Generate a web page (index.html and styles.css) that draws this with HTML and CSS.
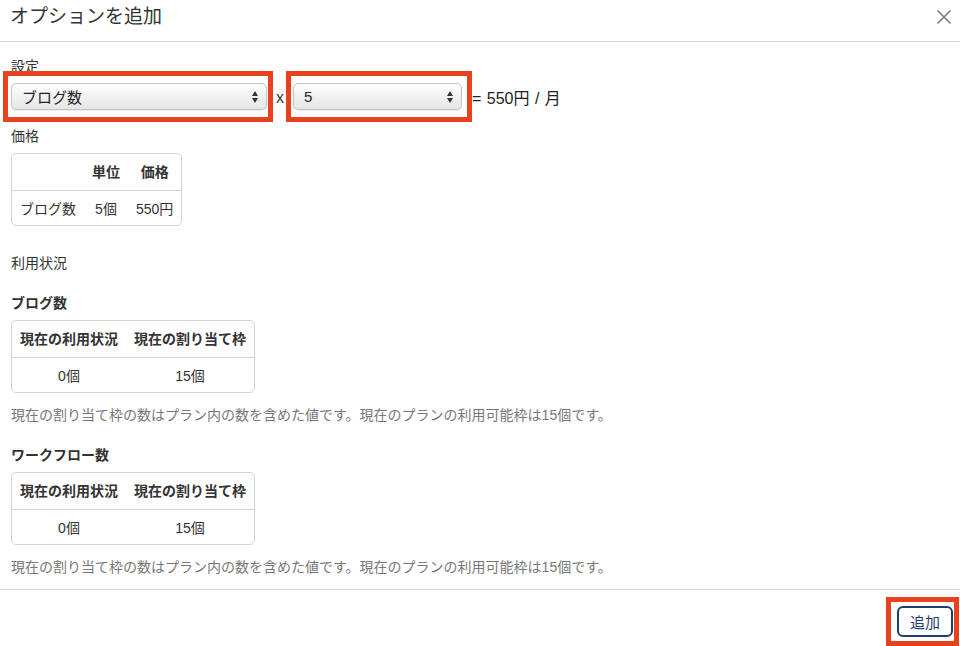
FILE: index.html
```html
<!DOCTYPE html>
<html lang="ja">
<head>
    <meta charset="UTF-8">
    <meta name="viewport" content="width=device-width, initial-scale=1.0">
    <title>オプションを追加</title>
    <link rel="stylesheet" href="styles.css">
</head>
<body>

<div class="modal">
    <div class="modal-header">
        <h4 class="modal-title">オプションを追加</h4>
        <button class="close" aria-label="閉じる">
            <svg width="16" height="16" viewBox="0 0 16 16">
                <path d="M1.5 1.5 L14.5 14.5 M14.5 1.5 L1.5 14.5" stroke="#6f6f6f" stroke-width="1.4" fill="none"/>
            </svg>
        </button>
    </div>

    <div class="modal-body">
        <div class="label">設定</div>
        <div class="setting-row">
            <span class="mark mark-first">
                <span class="select-box select-type">
                    ブログ数
                    <svg class="arrows" width="6" height="12" viewBox="0 0 6 12"><path d="M0 5 L3 0 L6 5 Z M0 7 L3 12 L6 7 Z" fill="#333"/></svg>
                </span>
            </span>
            <span class="times">x</span>
            <span class="mark mark-second">
                <span class="select-box select-count">
                    5
                    <svg class="arrows" width="6" height="12" viewBox="0 0 6 12"><path d="M0 5 L3 0 L6 5 Z M0 7 L3 12 L6 7 Z" fill="#333"/></svg>
                </span>
            </span>
            <span class="total">= 550円 / 月</span>
        </div>

        <div class="label label-price">価格</div>
        <div class="table-wrap">
            <table>
                <tr><th></th><th>単位</th><th>価格</th></tr>
                <tr><td>ブログ数</td><td>5個</td><td>550円</td></tr>
            </table>
        </div>

        <div class="label label-usage">利用状況</div>

        <div class="usage">
            <h5>ブログ数</h5>
            <div class="table-wrap">
                <table>
                    <tr><th>現在の利用状況</th><th>現在の割り当て枠</th></tr>
                    <tr><td>0個</td><td>15個</td></tr>
                </table>
            </div>
            <p class="note">現在の割り当て枠の数はプラン内の数を含めた値です。現在のプランの利用可能枠は15個です。</p>
        </div>

        <div class="usage">
            <h5>ワークフロー数</h5>
            <div class="table-wrap">
                <table>
                    <tr><th>現在の利用状況</th><th>現在の割り当て枠</th></tr>
                    <tr><td>0個</td><td>15個</td></tr>
                </table>
            </div>
            <p class="note">現在の割り当て枠の数はプラン内の数を含めた値です。現在のプランの利用可能枠は15個です。</p>
        </div>
    </div>

    <div class="modal-footer">
        <span class="mark mark-button">
            <button class="btn-add">追加</button>
        </span>
    </div>
</div>

</body>
</html>
```

FILE: styles.css
```css
body {
    margin: 0;
    padding: 0;
    background-color: #fff;
    color: #333;
    font-family: "Liberation Sans", "Noto Sans CJK JP", sans-serif;
    font-size: 14px;
}
.modal {
    width: 960px;
    height: 646px;
    overflow: hidden;
}
.modal-header {
    height: 41px;
    box-sizing: content-box;
    border-bottom: 1px solid #d3d3d3;
    display: flex;
    justify-content: space-between;
    align-items: flex-start;
    padding: 0 8px 0 10px;
}
.modal-title {
    margin: 0;
    padding-top: 4px;
    font-size: 19px;
    font-weight: normal;
    line-height: 25px;
    color: #333;
}
.close {
    margin-top: 9px;
    padding: 0;
    border: none;
    background: none;
    width: 16px;
    height: 16px;
    cursor: pointer;
}
.modal-body {
    padding: 14px 11px 12px;
}
.label {
    font-size: 14px;
    line-height: 20px;
}
.setting-row {
    display: flex;
    align-items: center;
    margin-top: 7px;
    height: 27px;
}
.mark {
    position: relative;
    display: inline-flex;
}
.mark::after {
    content: "";
    position: absolute;
    border: 5px solid #e8411e;
    pointer-events: none;
}
.mark-first::after {
    left: -8px;
    right: -6px;
    top: -12px;
    bottom: -12px;
}
.mark-second::after {
    left: -7px;
    right: -10px;
    top: -12px;
    bottom: -12px;
}
.mark-button::after {
    left: -11px;
    right: -6px;
    top: -9px;
    bottom: -9px;
}
.select-box {
    position: relative;
    display: flex;
    align-items: center;
    box-sizing: border-box;
    height: 27px;
    padding-left: 10px;
    border: 1px solid #c4c4c4;
    border-radius: 5px;
    background: linear-gradient(#fefefe, #f1f1f1 50%, #e6e6e6);
    box-shadow: 0 1px 1px rgba(0, 0, 0, 0.08);
    font-size: 15px;
    color: #222;
}
.select-type {
    width: 256px;
}
.select-count {
    width: 169px;
}
.arrows {
    position: absolute;
    right: 8px;
    top: 7px;
}
.times {
    width: 26px;
    text-align: center;
    font-size: 16px;
    padding-top: 2px;
}
.total {
    margin-left: 10px;
    font-size: 16px;
    color: #222;
    word-spacing: 1px;
}
.label-price {
    margin-top: 16px;
}
.table-wrap {
    display: inline-block;
    margin-top: 7px;
    border: 1px solid #d3d3d3;
    border-radius: 5px;
    overflow: hidden;
}
table {
    border-collapse: collapse;
}
th, td {
    padding: 8px 8px;
    line-height: 20px;
    text-align: center;
    font-size: 14px;
    white-space: nowrap;
}
th {
    font-weight: bold;
    border-bottom: 1px solid #d3d3d3;
}
td {
    padding-bottom: 6px;
}
.label-usage {
    margin-top: 24px;
}
.usage h5 {
    margin: 20px 0 0;
    font-size: 14px;
    line-height: 20px;
    font-weight: bold;
}
.usage + .usage h5 {
    margin-top: 20px;
}
.note {
    margin: 9px 0 0;
    line-height: 20px;
    font-size: 14px;
    color: #777;
}
.modal-footer {
    border-top: 1px solid #d3d3d3;
    display: flex;
    justify-content: flex-end;
    padding: 16px 7px 0 0;
}
.btn-add {
    height: 31px;
    padding: 0 11px;
    border: 2px solid #1d3b70;
    border-radius: 6px;
    background-color: #fff;
    color: #1d3b70;
    font-family: "Liberation Sans", "Noto Sans CJK JP", sans-serif;
    font-size: 15px;
    cursor: pointer;
}
```
